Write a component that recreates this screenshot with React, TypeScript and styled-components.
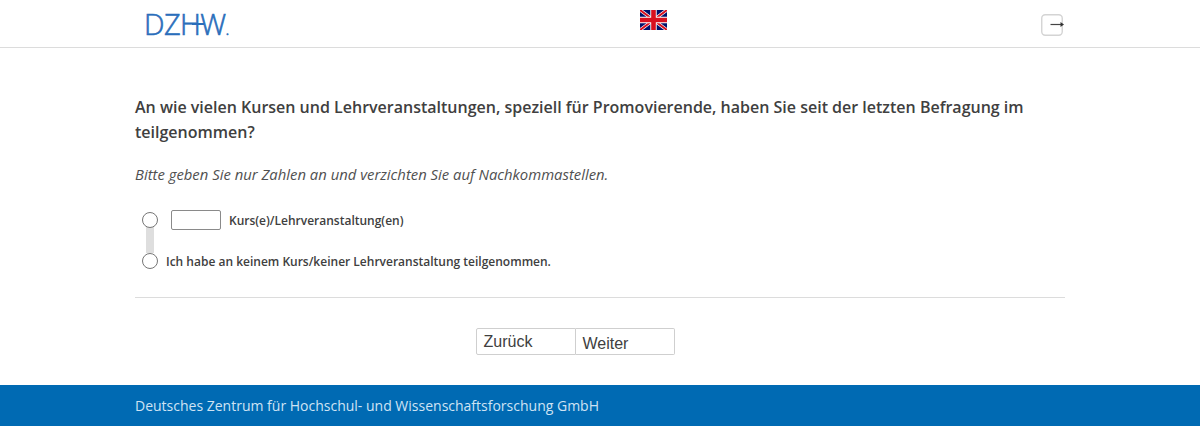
import styled, { createGlobalStyle } from 'styled-components';

const GlobalStyle = createGlobalStyle`
    html, body {
        margin: 0;
        padding: 0;
        background: #fff;
    }
    body {
        font-family: 'Open Sans', sans-serif;
        color: #404040;
    }
`;

const Header = styled.header`
    height: 47px;
    border-bottom: 1px solid #dcdcdc;
    display: grid;
    grid-template-columns: 1fr 1fr 1fr;
    padding: 0 135px;
`;

const Logo = styled.div`
    position: relative;
    width: 90px;
    margin: 9px 0 0 9px;
    font-family: 'Open Sans', sans-serif;
    font-weight: 300;
    font-size: 29px;
    line-height: 30px;
    letter-spacing: -0.6px;
    color: #2a6ebb;
    -webkit-text-stroke: 0.6px #2a6ebb;
    display: flex;
    align-items: baseline;
`;

const LogoBar = styled.span`
    position: absolute;
    left: 48px;
    top: 14px;
    width: 12px;
    height: 2px;
    background: #2a6ebb;
`;

const LogoDot = styled.span`
    font-size: 16px;
    letter-spacing: 0;
`;

const FlagCell = styled.div`
    display: flex;
    justify-content: center;
    padding-top: 10px;
    padding-left: 107px;
`;

const ExitCell = styled.div`
    display: flex;
    justify-content: flex-end;
    padding-top: 14px;
`;

const Main = styled.main`
    padding: 47px 135px 0;
`;

const Question = styled.h1`
    margin: 0;
    font-size: 16px;
    line-height: 25px;
    font-weight: 600;
    color: #404040;
    width: 900px;
`;

const Hint = styled.p`
    margin: 18px 0 0;
    font-size: 14.85px;
    line-height: 22px;
    font-style: italic;
    color: #505050;
`;

const Options = styled.div`
    position: relative;
    margin: 23px 0 0 7px;
    display: flex;
    flex-direction: column;
    gap: 17px;
`;

const Connector = styled.span`
    position: absolute;
    left: 4px;
    top: 16px;
    width: 8px;
    height: 29px;
    background: #dedede;
`;

const Option = styled.label`
    position: relative;
    height: 24px;
    display: flex;
    align-items: center;
    font-size: 12px;
    font-weight: 600;
    color: #404040;
`;

const Radio = styled.span`
    width: 14px;
    height: 14px;
    border: 1px solid #767676;
    border-radius: 50%;
    background: #fff;
    margin-right: 8px;
    flex: none;
`;

const NumberInput = styled.input`
    box-sizing: border-box;
    width: 50px;
    height: 20px;
    margin: 0 8px 0 5px;
    border: 1px solid #8a8a8a;
    border-radius: 2px;
    background: #fff;
    padding: 0;
`;

const Divider = styled.hr`
    margin: 24px 0 0;
    border: 0;
    border-top: 1px solid #dcdcdc;
`;

const Nav = styled.nav`
    display: flex;
    justify-content: center;
    margin-top: 30px;
    padding-right: 50px;
    height: 27px;
`;

const NavButton = styled.button<{ $first?: boolean }>`
    box-sizing: border-box;
    width: ${(p) => (p.$first ? 100 : 99)}px;
    height: 27px;
    background: #fff;
    border: 1px solid #cfcfcf;
    border-left-width: ${(p) => (p.$first ? 1 : 0)}px;
    border-radius: ${(p) => (p.$first ? '2px 0 0 2px' : '0 2px 2px 0')};
    font-family: 'Liberation Sans', sans-serif;
    font-size: 16px;
    color: #404040;
    text-align: left;
    padding: ${(p) => (p.$first ? 0 : 5)}px 0 0 7px;
`;

const Footer = styled.footer`
    margin-top: 30px;
    height: 41px;
    background: #006ab3;
    color: #cfe3f3;
    font-size: 14px;
    line-height: 41px;
    padding-left: 135px;
`;

const UkFlag = () => (
    <svg width="27" height="20" viewBox="0 0 27 20">
        <rect width="27" height="20" fill="#00116b" />
        <path d="M0 0L27 20M27 0L0 20" stroke="#fff" strokeWidth="3.4" />
        <path d="M0 0L27 20M27 0L0 20" stroke="#d8101f" strokeWidth="2" />
        <path d="M13.5 0V20M0 10H27" stroke="#fff" strokeWidth="6.4" />
        <path d="M13.5 0V20M0 10H27" stroke="#d8101f" strokeWidth="4.6" />
    </svg>
);

const ExitIcon = () => (
    <svg width="24" height="22" viewBox="0 0 24 22">
        <rect x="0.75" y="0.75" width="20.5" height="20.5" rx="3.5" fill="none" stroke="#d4d4d4" strokeWidth="1.4" />
        <path d="M9.5 10.5H20" stroke="#444" strokeWidth="1.2" />
        <path d="M19.5 8L23 10.5L19.5 13Z" fill="#333" />
    </svg>
);

export default function App() {
    return (
        <>
            <GlobalStyle />
            <Header>
                <Logo>
                    DZHW<LogoDot>.</LogoDot>
                    <LogoBar />
                </Logo>
                <FlagCell>
                    <UkFlag />
                </FlagCell>
                <ExitCell>
                    <ExitIcon />
                </ExitCell>
            </Header>
            <Main>
                <Question>
                    An wie vielen Kursen und Lehrveranstaltungen, speziell für Promovierende, haben Sie seit der letzten Befragung im teilgenommen?
                </Question>
                <Hint>Bitte geben Sie nur Zahlen an und verzichten Sie auf Nachkommastellen.</Hint>
                <Options>
                    <Connector />
                    <Option>
                        <Radio />
                        <NumberInput type="text" />
                        Kurs(e)/Lehrveranstaltung(en)
                    </Option>
                    <Option>
                        <Radio />
                        Ich habe an keinem Kurs/keiner Lehrveranstaltung teilgenommen.
                    </Option>
                </Options>
                <Divider />
                <Nav>
                    <NavButton $first>Zurück</NavButton>
                    <NavButton>Weiter</NavButton>
                </Nav>
            </Main>
            <Footer>Deutsches Zentrum für Hochschul- und Wissenschaftsforschung GmbH</Footer>
        </>
    );
}
